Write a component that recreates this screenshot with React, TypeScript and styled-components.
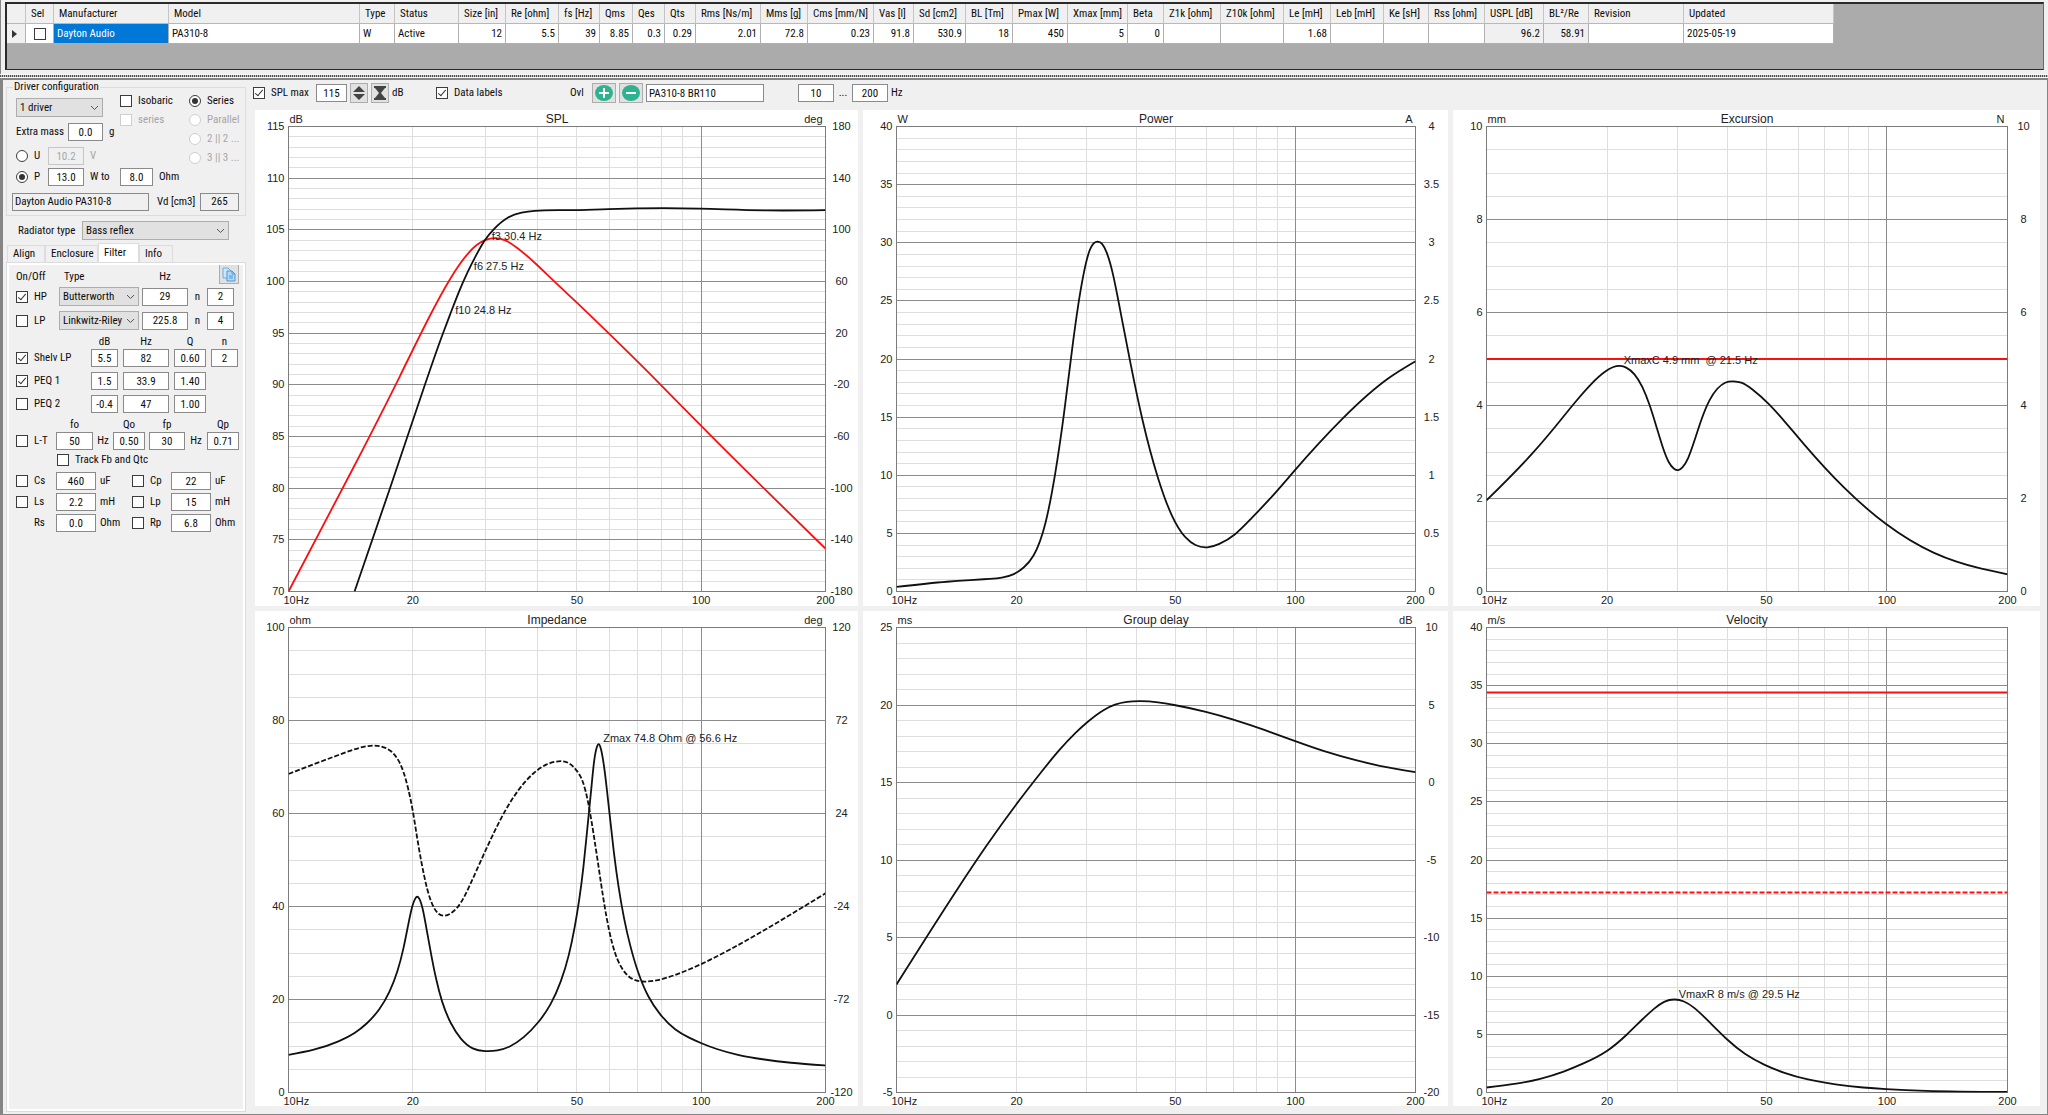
import React, { useId, useLayoutEffect, useRef, useState } from "react";
import styled, { createGlobalStyle, css } from "styled-components";

/* ------------------------------------------------------------------ */
/* Shared values                                                       */
/* ------------------------------------------------------------------ */

const uiFont = `"Liberation Sans Narrow", "Roboto Condensed", "Liberation Sans", Arial, sans-serif`;
const plotFont = `"Liberation Sans", Arial, sans-serif`;

const color = {
  face: "#f0f0f0",
  text: "#0c0c0c",
  faint: "#a6a6a6",
  frame: "#dcdcdc",
  fieldEdge: "#8a8a8a",
  button: "#e1e1e1",
  buttonEdge: "#adadad",
  shadow: "#858585",
};

const GlobalStyle = createGlobalStyle`
  *, *::before, *::after { box-sizing: border-box; }
  body {
    margin: 0;
    background: ${color.face};
    color: ${color.text};
    font: 11px/14px ${uiFont};
  }
  button, input, select { font: inherit; color: inherit; margin: 0; }
`;

/* ------------------------------------------------------------------ */
/* Frame                                                               */
/* ------------------------------------------------------------------ */

const Page = styled.div`
  display: flex;
  flex-direction: column;
  height: 100vh;
  min-height: 720px;
`;

const DriverPane = styled.section`
  flex: none;
  padding: 2px 4px 4px;
  border-left: 1px solid ${color.shadow};
`;

const GridFrame = styled.div`
  min-height: 68px;
  border: 2px solid #2a2a2a;
  border-right: 1px solid #696969;
  border-bottom-width: 1px;
  background: #ababab;
  overflow: hidden;
`;

const Splitter = styled.div`
  flex: none;
  height: 4px;
  border-top: 1px solid #fafafa;
  border-bottom: 1px solid #fafafa;
  background: repeating-linear-gradient(90deg, #4c4c4c 0 1px, #c4c4c4 1px 2px);
`;

const Workspace = styled.main`
  flex: 1;
  min-height: 0;
  display: grid;
  grid-template-columns: 246px 1fr;
  border-style: solid;
  border-color: ${color.shadow};
  border-width: 2px 1px 1px 3px;
`;

/* ------------------------------------------------------------------ */
/* Driver table                                                        */
/* ------------------------------------------------------------------ */

const DriverTable = styled.table`
  table-layout: fixed;
  width: 1826px;
  border-collapse: separate;
  border-spacing: 0;
  white-space: nowrap;
`;

const HeadCell = styled.th`
  height: 20px;
  padding: 0 0 0 5px;
  overflow: hidden;
  font-weight: normal;
  text-align: left;
  background: ${color.face};
  border-right: 1px solid #c4c4c4;
  border-bottom: 1px solid #b8b8b8;
`;

const BodyCell = styled.td<{ $right?: boolean; $tone?: "selected" | "computed" }>`
  height: 20px;
  padding: 0 3px;
  overflow: hidden;
  text-align: ${(p) => (p.$right ? "right" : "left")};
  background: ${(p) => (p.$tone === "selected" ? "#0078d7" : p.$tone === "computed" ? color.face : "#fff")};
  color: ${(p) => (p.$tone === "selected" ? "#fff" : color.text)};
  border-right: 1px solid #b0b0b0;
  border-bottom: 1px solid #b0b0b0;
`;

const RowMark = styled.svg`
  display: block;
  margin-left: 2px;
`;

type Column = {
  name: string;
  width: number;
  value?: string;
  right?: boolean;
  tone?: "selected" | "computed";
};

const columns: Column[] = [
  { name: "Manufacturer", width: 115, value: "Dayton Audio", tone: "selected" },
  { name: "Model", width: 191, value: "PA310-8" },
  { name: "Type", width: 35, value: "W" },
  { name: "Status", width: 64, value: "Active" },
  { name: "Size [in]", width: 47, value: "12", right: true },
  { name: "Re [ohm]", width: 53, value: "5.5", right: true },
  { name: "fs [Hz]", width: 41, value: "39", right: true },
  { name: "Qms", width: 33, value: "8.85", right: true },
  { name: "Qes", width: 32, value: "0.3", right: true },
  { name: "Qts", width: 31, value: "0.29", right: true },
  { name: "Rms [Ns/m]", width: 65, value: "2.01", right: true },
  { name: "Mms [g]", width: 47, value: "72.8", right: true },
  { name: "Cms [mm/N]", width: 66, value: "0.23", right: true },
  { name: "Vas [l]", width: 40, value: "91.8", right: true },
  { name: "Sd [cm2]", width: 52, value: "530.9", right: true },
  { name: "BL [Tm]", width: 47, value: "18", right: true },
  { name: "Pmax [W]", width: 55, value: "450", right: true },
  { name: "Xmax [mm]", width: 60, value: "5", right: true },
  { name: "Beta", width: 36, value: "0", right: true },
  { name: "Z1k [ohm]", width: 57 },
  { name: "Z10k [ohm]", width: 63 },
  { name: "Le [mH]", width: 47, value: "1.68", right: true },
  { name: "Leb [mH]", width: 53 },
  { name: "Ke [sH]", width: 45 },
  { name: "Rss [ohm]", width: 56 },
  { name: "USPL [dB]", width: 59, value: "96.2", right: true, tone: "computed" },
  { name: "BL²/Re", width: 45, value: "58.91", right: true, tone: "computed" },
  { name: "Revision", width: 95 },
  { name: "Updated", width: 150, value: "2025-05-19" },
];

/* ------------------------------------------------------------------ */
/* Controls                                                            */
/* ------------------------------------------------------------------ */

const Tick = styled.input.attrs({ type: "checkbox" })`
  appearance: none;
  flex: none;
  display: grid;
  place-items: center;
  width: 12px;
  height: 12px;
  background: #fff;
  border: 1px solid #3c3c3c;

  &:checked::before {
    content: "";
    width: 4px;
    height: 8px;
    margin-bottom: 2px;
    border: solid #333;
    border-width: 0 1px 1px 0;
    transform: rotate(40deg);
  }
  &:disabled { border-color: #cfcfcf; }
`;

const Dot = styled.input.attrs({ type: "radio" })`
  appearance: none;
  flex: none;
  display: grid;
  place-items: center;
  width: 12px;
  height: 12px;
  background: #fff;
  border: 1px solid #3c3c3c;
  border-radius: 50%;

  &:checked::before {
    content: "";
    width: 6px;
    height: 6px;
    border-radius: 50%;
    background: #333;
  }
  &:disabled { border-color: #cfcfcf; }
`;

const Choice = styled.label<{ $w?: number; $off?: boolean; $cell?: boolean }>`
  flex: none;
  display: flex;
  align-items: center;
  gap: 6px;
  width: ${(p) => (p.$w ? `${p.$w}px` : "auto")};
  color: ${(p) => (p.$off ? color.faint : "inherit")};
  white-space: nowrap;
  ${(p) => p.$cell && css`justify-content: center;`}
`;

const Field = styled.input.attrs({ type: "text" })<{ $w: number; $start?: boolean }>`
  flex: none;
  width: ${(p) => p.$w}px;
  height: 18px;
  padding: 0 2px;
  text-align: ${(p) => (p.$start ? "left" : "center")};
  background: #fff;
  border: 1px solid ${color.fieldEdge};
  border-radius: 0;
  outline: 0;

  &:read-only { background: ${color.face}; }
  &:disabled { color: ${color.faint}; background: ${color.face}; border-color: #c6c6c6; }
`;

const Caption = styled.span<{ $w?: number; $center?: boolean; $off?: boolean; $indent?: boolean }>`
  flex: none;
  width: ${(p) => (p.$w ? `${p.$w}px` : "auto")};
  padding-left: ${(p) => (p.$indent ? "18px" : "0")};
  text-align: ${(p) => (p.$center ? "center" : "left")};
  color: ${(p) => (p.$off ? color.faint : "inherit")};
  white-space: nowrap;
`;

const ComboBox = styled.span<{ $w: number }>`
  flex: none;
  display: grid;
  width: ${(p) => p.$w}px;
  height: 19px;

  > * { grid-area: 1 / 1; }
  > svg { place-self: center end; margin-right: 4px; pointer-events: none; }
`;

const ComboSelect = styled.select`
  appearance: none;
  width: 100%;
  padding: 0 12px 0 3px;
  background: ${color.button};
  border: 1px solid ${color.buttonEdge};
  border-radius: 0;
`;

function Combo({ width, value, label, id }: { width: number; value: string; label?: string; id?: string }) {
  return (
    <ComboBox $w={width}>
      <ComboSelect id={id} aria-label={label} defaultValue={value}>
        <option>{value}</option>
      </ComboSelect>
      <svg width="9" height="6" viewBox="0 0 9 6" aria-hidden="true">
        <path d="M1 1l3.5 3.5L8 1" fill="none" stroke="#555" />
      </svg>
    </ComboBox>
  );
}

const IconButton = styled.button<{ $w: number }>`
  flex: none;
  display: grid;
  place-items: center;
  width: ${(p) => p.$w}px;
  height: 20px;
  padding: 0;
  background: ${color.button};
  border: 1px solid ${color.buttonEdge};
`;

/* ------------------------------------------------------------------ */
/* Sidebar                                                             */
/* ------------------------------------------------------------------ */

const Sidebar = styled.aside`
  display: flex;
  flex-direction: column;
  min-height: 0;
  padding: 1px 3px 2px;
`;

const ConfigGroup = styled.fieldset`
  min-width: 0;
  margin: 0;
  padding: 0 5px 4px;
  border: 1px solid ${color.frame};
`;

const ConfigLegend = styled.legend`
  margin-left: 1px;
  padding: 0 1px;
  line-height: 12px;
`;

const ConfigGrid = styled.div`
  display: grid;
  grid-template-columns: 104px 69px 1fr;
  row-gap: 3px;
  margin-top: -2px;
  padding-left: 4px;
`;

const MassStack = styled.div`
  display: flex;
  flex-direction: column;
  gap: 6px;
  padding-top: 7px;
`;

const ChoiceStack = styled.div<{ $tall?: boolean }>`
  display: grid;
  grid-auto-rows: 19px;
  align-content: start;
  ${(p) => p.$tall && css`grid-row: span 2;`}
`;

const Line = styled.div<{ $gap: number; $h?: number; $top?: number; $wide?: boolean; $low?: boolean }>`
  display: flex;
  align-items: ${(p) => (p.$low ? "flex-end" : "center")};
  gap: ${(p) => p.$gap}px;
  height: ${(p) => p.$h ?? 18}px;
  margin-top: ${(p) => p.$top ?? 0}px;
  ${(p) => p.$wide && css`grid-column: 1 / 3;`}
`;

const RadiatorLine = styled.div`
  display: flex;
  align-items: center;
  margin: 5px 0 3px;
  padding-left: 12px;

  > label { width: 64px; }
`;

const TabStrip = styled.div`
  display: flex;
  align-items: flex-end;
  height: 19px;
  padding-left: 1px;
`;

const TabButton = styled.button<{ $w: number; $active?: boolean }>`
  width: ${(p) => p.$w}px;
  height: ${(p) => (p.$active ? 19 : 17)}px;
  padding: 0 0 0 5px;
  text-align: left;
  background: ${(p) => (p.$active ? "#fff" : color.face)};
  border: 1px solid ${color.frame};
  border-bottom: 0;
`;

const TabPage = styled.div`
  flex: 1;
  min-height: 0;
  padding: 1px 6px 0 9px;
  border: 1px solid ${color.frame};
  outline: 2px solid #fff;
  outline-offset: -3px;
`;

const CopyButton = styled(IconButton)`
  margin-left: auto;
`;

function Sides() {
  return (
    <Sidebar>
      <ConfigGroup>
        <ConfigLegend>Driver configuration</ConfigLegend>
        <ConfigGrid>
          <MassStack>
            <Combo width={87} value="1 driver" label="Number of drivers" />
            <Line $gap={6}>
              <Caption as="label" htmlFor="mass" $w={46}>Extra mass</Caption>
              <Field id="mass" $w={35} defaultValue="0.0" />
              <Caption>g</Caption>
            </Line>
            <Line $gap={6}>
              <Choice $w={26}><Dot name="drive" />U</Choice>
              <Field $w={36} defaultValue="10.2" disabled aria-label="Voltage" />
              <Caption $off>V</Caption>
            </Line>
          </MassStack>
          <ChoiceStack>
            <Choice><Tick />Isobaric</Choice>
            <Choice $off><Tick disabled />series</Choice>
          </ChoiceStack>
          <ChoiceStack $tall>
            <Choice><Dot name="wiring" defaultChecked />Series</Choice>
            <Choice $off><Dot name="wiring" disabled />Parallel</Choice>
            <Choice $off><Dot name="wiring" disabled />2 || 2 ...</Choice>
            <Choice $off><Dot name="wiring" disabled />3 || 3 ...</Choice>
          </ChoiceStack>
          <Line $gap={6} $wide>
            <Choice $w={26}><Dot name="drive" defaultChecked />P</Choice>
            <Field $w={36} defaultValue="13.0" aria-label="Power" />
            <Caption $w={24}>W to</Caption>
            <Field $w={33} defaultValue="8.0" aria-label="Load" />
            <Caption>Ohm</Caption>
          </Line>
        </ConfigGrid>
        <Line $gap={8} $h={19} $top={6}>
          <Field $w={137} $start readOnly defaultValue="Dayton Audio PA310-8" aria-label="Driver" />
          <Caption as="label" htmlFor="vd" $w={35}>Vd [cm3]</Caption>
          <Field id="vd" $w={39} readOnly defaultValue="265" />
        </Line>
      </ConfigGroup>

      <RadiatorLine>
        <label htmlFor="radiator">Radiator type</label>
        <Combo id="radiator" width={147} value="Bass reflex" />
      </RadiatorLine>

      <TabStrip role="tablist">
        <TabButton role="tab" $w={38}>Align</TabButton>
        <TabButton role="tab" $w={53}>Enclosure</TabButton>
        <TabButton role="tab" aria-selected $active $w={41}>Filter</TabButton>
        <TabButton role="tab" $w={34}>Info</TabButton>
      </TabStrip>
      <TabPage role="tabpanel">
        <Filters />
      </TabPage>
    </Sidebar>
  );
}

function Filters() {
  return (
    <div>
      <Line $gap={3} $h={20} $low>
        <Caption $w={45}>On/Off</Caption>
        <Caption $w={75}>Type</Caption>
        <Caption $w={46} $center>Hz</Caption>
        <CopyButton $w={20} aria-label="Copy filter">
          <svg width="14" height="15" viewBox="0 0 14 15" aria-hidden="true">
            <path d="M1 1h5l3 3v7H1z" fill="#cfe6fa" stroke="#6aaee0" />
            <path d="M5 4h5l3 3v7H5z" fill="#b5d8f6" stroke="#4a98d6" />
            <path d="M10 4v3h3M7 9h4M7 11h4" fill="none" stroke="#4a98d6" />
          </svg>
        </CopyButton>
      </Line>
      <PassLine name="HP" kind="Butterworth" hz="29" order="2" top={3} on />
      <PassLine name="LP" kind="Linkwitz-Riley" hz="225.8" order="4" top={5} />

      <Line $gap={5} $h={12} $top={6}>
        <Caption $w={70} />
        <Caption $w={27} $center>dB</Caption>
        <Caption $w={46} $center>Hz</Caption>
        <Caption $w={32} $center>Q</Caption>
        <Caption $w={27} $center>n</Caption>
      </Line>
      <EqLine name="Shelv LP" db="5.5" hz="82" q="0.60" order="2" top={1} on />
      <EqLine name="PEQ 1" db="1.5" hz="33.9" q="1.40" top={5} on />
      <EqLine name="PEQ 2" db="-0.4" hz="47" q="1.00" top={5} />

      <Line $gap={4} $h={12} $top={6}>
        <Caption $w={36} />
        <Caption $w={37} $center>fo</Caption>
        <Caption $w={12} />
        <Caption $w={32} $center>Qo</Caption>
        <Caption $w={36} $center>fp</Caption>
        <Caption $w={14} />
        <Caption $w={32} $center>Qp</Caption>
      </Line>
      <Line $gap={4} $top={1}>
        <Choice $w={36}><Tick />L-T</Choice>
        <Field $w={37} defaultValue="50" aria-label="fo" />
        <Caption $w={12} $center>Hz</Caption>
        <Field $w={32} defaultValue="0.50" aria-label="Qo" />
        <Field $w={36} defaultValue="30" aria-label="fp" />
        <Caption $w={14} $center>Hz</Caption>
        <Field $w={32} defaultValue="0.71" aria-label="Qp" />
      </Line>
      <Line $gap={4} $h={14} $top={3}>
        <Caption $w={37} />
        <Choice><Tick />Track Fb and Qtc</Choice>
      </Line>

      <PartLine left="Cs" leftValue="460" right="Cp" rightValue="22" unit="uF" top={5} />
      <PartLine left="Ls" leftValue="2.2" right="Lp" rightValue="15" unit="mH" top={3} />
      <PartLine left="Rs" leftValue="0.0" right="Rp" rightValue="6.8" unit="Ohm" top={3} fixedLeft />
    </div>
  );
}

type PassProps = { name: string; kind: string; hz: string; order: string; top: number; on?: boolean };

function PassLine({ name, kind, hz, order, top, on }: PassProps) {
  return (
    <Line $gap={3} $h={19} $top={top}>
      <Choice $w={40}><Tick defaultChecked={on} />{name}</Choice>
      <Combo width={80} value={kind} label={`${name} type`} />
      <Field $w={46} defaultValue={hz} aria-label={`${name} Hz`} />
      <Caption $w={13} $center>n</Caption>
      <Field $w={27} defaultValue={order} aria-label={`${name} n`} />
    </Line>
  );
}

type EqProps = { name: string; db: string; hz: string; q: string; order?: string; top: number; on?: boolean };

function EqLine({ name, db, hz, q, order, top, on }: EqProps) {
  return (
    <Line $gap={5} $top={top}>
      <Choice $w={70}><Tick defaultChecked={on} />{name}</Choice>
      <Field $w={27} defaultValue={db} aria-label={`${name} dB`} />
      <Field $w={46} defaultValue={hz} aria-label={`${name} Hz`} />
      <Field $w={32} defaultValue={q} aria-label={`${name} Q`} />
      {order && <Field $w={27} defaultValue={order} aria-label={`${name} n`} />}
    </Line>
  );
}

type PartProps = {
  left: string;
  leftValue: string;
  right: string;
  rightValue: string;
  unit: string;
  top: number;
  fixedLeft?: boolean;
};

function PartLine({ left, leftValue, right, rightValue, unit, top, fixedLeft }: PartProps) {
  return (
    <Line $gap={4} $top={top}>
      {fixedLeft ? <Caption $w={36} $indent>{left}</Caption> : <Choice $w={36}><Tick />{left}</Choice>}
      <Field $w={40} defaultValue={leftValue} aria-label={`${left} value`} />
      <Caption $w={28}>{unit}</Caption>
      <Choice $w={35}><Tick />{right}</Choice>
      <Field $w={40} defaultValue={rightValue} aria-label={`${right} value`} />
      <Caption $w={24}>{unit}</Caption>
    </Line>
  );
}

/* ------------------------------------------------------------------ */
/* Toolbar                                                             */
/* ------------------------------------------------------------------ */

const ChartPane = styled.section`
  display: flex;
  flex-direction: column;
  min-width: 0;
  min-height: 0;
  padding: 3px 7px 8px 4px;
`;

const Toolbar = styled.div`
  flex: none;
  display: flex;
  height: 27px;
`;

const ToolGroup = styled.div<{ $w?: number }>`
  display: flex;
  align-items: center;
  gap: 3px;
  height: 20px;
  min-width: ${(p) => (p.$w ? `${p.$w}px` : "0")};
`;

function Round({ plus }: { plus?: boolean }) {
  return (
    <svg width="18" height="16" viewBox="0 0 18 16" aria-hidden="true">
      <ellipse cx="9" cy="8" rx="9" ry="8" fill="#2fb290" />
      <path d={plus ? "M4 8h10M9 3v10" : "M4 8h10"} stroke="#fff" strokeWidth="2" fill="none" />
    </svg>
  );
}

function Tools() {
  return (
    <Toolbar>
      <ToolGroup $w={183}>
        <Choice $w={60}><Tick defaultChecked />SPL max</Choice>
        <Field $w={31} defaultValue="115" aria-label="SPL max value" />
        <IconButton $w={18} aria-label="Step SPL max">
          <svg width="12" height="14" viewBox="0 0 12 14" aria-hidden="true">
            <path d="M6 0l6 6H0zM6 14l6-6H0z" fill="#444" />
          </svg>
        </IconButton>
        <IconButton $w={18} aria-label="Fit SPL range">
          <svg width="12" height="14" viewBox="0 0 12 14" aria-hidden="true">
            <path d="M0 0h12v2h-1L7 7l4 5h1v2H0v-2h1l4-5-4-5H0z" fill="#444" />
          </svg>
        </IconButton>
        <Caption>dB</Caption>
      </ToolGroup>
      <ToolGroup $w={134}>
        <Choice><Tick defaultChecked />Data labels</Choice>
      </ToolGroup>
      <ToolGroup $w={228}>
        <Caption $w={19}>Ovl</Caption>
        <IconButton $w={24} aria-label="Add overlay"><Round plus /></IconButton>
        <IconButton $w={24} aria-label="Remove overlay"><Round /></IconButton>
        <Field $w={118} $start defaultValue="PA310-8 BR110" aria-label="Overlay name" />
      </ToolGroup>
      <ToolGroup>
        <Field $w={36} defaultValue="10" aria-label="Lowest frequency" />
        <Caption $w={12} $center>...</Caption>
        <Field $w={36} defaultValue="200" aria-label="Highest frequency" />
        <Caption>Hz</Caption>
      </ToolGroup>
    </Toolbar>
  );
}

/* ------------------------------------------------------------------ */
/* Charts                                                              */
/* ------------------------------------------------------------------ */

const ChartGrid = styled.div`
  flex: 1;
  min-height: 0;
  display: grid;
  grid-template-columns: 603fr 585fr 587fr;
  grid-template-rows: 1fr 1fr;
  gap: 5px;
  margin-left: 2px;
`;

const ChartPanel = styled.figure`
  min-width: 0;
  min-height: 0;
  margin: 0;
  overflow: hidden;
  background: #fff;

  svg { display: block; font: 11px ${plotFont}; fill: #222; }
`;

/* Curve points: [thousandths along the log frequency axis, value]. */
type Point = [number, number];

type Curve = { points: Point[]; stroke?: string; dashed?: boolean; onRight?: boolean };
type Note = { hz: number; value: number; text: string };

type ChartSpec = {
  title: string;
  unit: string;
  rightUnit?: string;
  range: [number, number];
  rightRange?: [number, number];
  major: number;
  minor: number;
  rightLabels?: string[];
  curves: Curve[];
  notes?: Note[];
};

const BLACK = "#111";
const RED = "#fa1010";

const charts: ChartSpec[] = [
  {
    title: "SPL", unit: "dB", rightUnit: "deg", range: [70, 115], major: 5, minor: 1,
    rightLabels: ["-180", "-140", "-100", "-60", "-20", "20", "60", "100", "140", "180"],
    curves: [
      {
        stroke: RED,
        points: [[0, 70], [120, 81.9], [208, 90.9], [260, 96.35], [301, 100.25],
          [335, 102.75], [351, 103.55], [366, 104], [386, 104.2], [405, 103.95], [426, 103.25],
          [463, 101.6], [492, 100.15], [534, 98.1], [596, 95], [679, 90.75], [769, 86], [885, 80], [1000, 74.15]],
      },
      {
        points: [[123, 70], [189, 80], [254, 90], [286, 94.75], [302, 96.95], [317, 98.95],
          [334, 100.95], [350, 102.6], [365, 103.95], [383, 105.1], [409, 106.2], [434, 106.66], [459, 106.84],
          [534, 106.9], [596, 107], [700, 107.1], [767, 107.05],
          [891, 106.88], [1000, 106.9]],
      },
    ],
    notes: [
      { hz: 30.4, value: 103.8, text: "f3 30.4 Hz" },
      { hz: 27.5, value: 100.9, text: "f6 27.5 Hz" },
      { hz: 24.8, value: 96.7, text: "f10 24.8 Hz" },
    ],
  },
  {
    title: "Power", unit: "W", rightUnit: "A", range: [0, 40], major: 5, minor: 1,
    rightLabels: ["0", "0.5", "1", "1.5", "2", "2.5", "3", "3.5", "4"],
    curves: [
      {
        points: [[0, 0.4], [97, 0.84], [142, 0.98], [180, 1.09], [203, 1.2], [226, 1.5], [245, 2.06],
          [264, 3.1], [287, 5.9], [306, 10.2], [323, 15.4],
          [340, 21.4], [350, 24.6], [360, 27.2], [371, 29.2], [380, 29.95], [388, 30.1], [396, 29.9], [405, 29.15],
          [417, 27.3], [428, 24.9], [451, 19.6], [474, 14.75], [504, 9.75],
          [530, 6.6], [557, 4.65], [576, 4], [599, 3.8], [622, 4.1], [653, 4.95], [683, 6.25],
          [721, 8.05], [767, 10.4], [858, 14.8], [950, 18.4], [1000, 19.8]],
      },
    ],
  },
  {
    title: "Excursion", unit: "mm", rightUnit: "N", range: [0, 10], major: 2, minor: 0.5,
    rightLabels: ["0", "2", "4", "6", "8", "10"],
    curves: [
      { stroke: RED, points: [[0, 5], [1000, 5]] },
      {
        points: [[0, 1.96], [88, 2.97], [133, 3.56], [171, 4.08], [201, 4.46], [228, 4.73],
          [256, 4.85], [269, 4.81], [284, 4.67], [299, 4.4], [313, 4.01], [326, 3.55], [339, 3.08], [350, 2.78],
          [360, 2.64], [368, 2.61], [376, 2.67], [387, 2.87], [399, 3.24], [413, 3.71], [428, 4.11], [443, 4.36],
          [458, 4.49], [474, 4.52], [489, 4.49], [511, 4.34], [542, 4.03], [572, 3.66], [610, 3.16],
          [685, 2.25], [767, 1.45], [859, 0.83], [950, 0.49], [1000, 0.37]],
      },
    ],
    notes: [{ hz: 21.5, value: 4.86, text: "XmaxC 4.9 mm\u00a0 @ 21.5 Hz" }],
  },
  {
    title: "Impedance", unit: "ohm", rightUnit: "deg", range: [0, 100], rightRange: [-120, 120], major: 20, minor: 5,
    rightLabels: ["-120", "-72", "-24", "24", "72", "120"],
    curves: [
      {
        dashed: true, onRight: true,
        points: [[0, 44.4], [47, 49.4], [93, 54.2], [131, 57.8], [157, 59], [176, 58.3], [191, 56.1], [203, 52.2],
          [214, 45.5], [223, 36.6], [231, 26], [239, 12.5], [248, -1.8], [258, -14.6], [268, -23], [279, -27.6],
          [290, -28.7], [305, -27], [321, -22], [336, -14], [355, -2.4], [385, 15.5], [404, 25.6],
          [427, 35.6], [457, 44.9], [480, 49.2], [507, 51], [522, 50], [537, 46], [549, 39.6], [558, 29.6], [568, 13.6],
          [577, -2.8], [587, -21], [597, -36.2], [608, -47.9], [621, -55.9], [636, -60.6], [659, -62.7], [685, -62.1],
          [723, -59], [767, -53.9], [822, -46.2], [883, -36.7], [1000, -17.2]],
      },
      {
        points: [[0, 8.1], [47, 9.2], [93, 11], [123, 12.8], [146, 14.9], [169, 17.9], [188, 21.7], [203, 26.2],
          [214, 31], [223, 36.1], [231, 40.2], [236, 41.7], [240, 42.1], [244, 41.6], [250, 39.4], [257, 35.2],
          [266, 29.5], [275, 24.4], [286, 19.6], [302, 15], [321, 11.6], [343, 9.5], [366, 8.9], [389, 9.05],
          [412, 9.9], [438, 11.9], [465, 15.1], [488, 19], [507, 23.9], [522, 29.6], [533, 35.6], [541, 41.2],
          [549, 48.3], [556, 56.2], [564, 65.5], [569, 71.1], [574, 74.2], [577.5, 74.9], [581, 74.2], [587, 70.6],
          [593, 65], [606, 51.6], [615, 44], [625, 37.4], [636, 31.8], [651, 25.9], [670, 20.7],
          [693, 16.7], [720, 13.6], [746, 11.8], [769, 10.6], [799, 9.3], [837, 8.1], [883, 7.15], [936, 6.4], [1000, 5.8]],
      },
    ],
    notes: [{ hz: 56.6, value: 74.9, text: "Zmax 74.8 Ohm @ 56.6 Hz" }],
  },
  {
    title: "Group delay", unit: "ms", rightUnit: "dB", range: [-5, 25], major: 5, minor: 1,
    rightLabels: ["-20", "-15", "-10", "-5", "0", "5", "10"],
    curves: [
      {
        points: [[0, 1.97], [116, 8.05], [173, 10.9], [231, 13.6], [276, 15.55], [314, 17.1], [345, 18.2],
          [368, 18.9], [398, 19.65], [421, 20.02], [444, 20.2], [470, 20.25], [504, 20.17], [535, 20], [596, 19.56],
          [649, 19.06], [710, 18.38], [767, 17.68], [824, 17.02], [885, 16.44], [931, 16.08], [1000, 15.67]],
      },
    ],
  },
  {
    title: "Velocity", unit: "m/s", range: [0, 40], major: 5, minor: 1,
    curves: [
      { stroke: RED, points: [[0, 34.4], [1000, 34.4]] },
      { stroke: RED, dashed: true, points: [[0, 17.2], [1000, 17.2]] },
      {
        points: [[0, 0.43], [57, 0.76], [103, 1.18], [148, 1.8], [186, 2.5], [231, 3.57], [269, 4.97], [299, 6.28],
          [322, 7.22], [341, 7.8], [361, 8], [379, 7.83], [398, 7.3], [428, 6.05], [462, 4.56], [496, 3.33], [534, 2.38],
          [572, 1.69], [617, 1.12], [670, 0.7], [723, 0.43], [767, 0.29], [844, 0.14], [1000, 0.05]],
      },
    ],
    notes: [{ hz: 29.5, value: 8, text: "VmaxR 8 m/s @ 29.5 Hz" }],
  },
];

/* Natural cubic spline through the points, written as bezier segments. */
function smoothPath(pts: Point[]): string {
  const n = pts.length;
  const h = (i: number) => pts[i + 1][0] - pts[i][0];
  const slope = (i: number) => (pts[i + 1][1] - pts[i][1]) / h(i);
  const c = new Array<number>(n).fill(0);
  const r = new Array<number>(n).fill(0);
  for (let i = 1; i < n - 1; i++) {
    const div = 2 * (h(i - 1) + h(i)) - h(i - 1) * c[i - 1];
    c[i] = h(i) / div;
    r[i] = (6 * (slope(i) - slope(i - 1)) - h(i - 1) * r[i - 1]) / div;
  }
  const bend = new Array<number>(n).fill(0);
  for (let i = n - 2; i > 0; i--) bend[i] = r[i] - c[i] * bend[i + 1];

  let d = `M${pts[0][0].toFixed(2)} ${pts[0][1].toFixed(2)}`;
  for (let i = 0; i < n - 1; i++) {
    const [x0, y0] = pts[i];
    const [x1, y1] = pts[i + 1];
    const w = h(i);
    const start = slope(i) - (w * (2 * bend[i] + bend[i + 1])) / 6;
    const end = slope(i) + (w * (bend[i] + 2 * bend[i + 1])) / 6;
    const third = w / 3;
    d += `C${[x0 + third, y0 + start * third, x1 - third, y1 - end * third, x1, y1].map((v) => v.toFixed(2)).join(" ")}`;
  }
  return d;
}

const share = (hz: number) => Math.log(hz / 10) / Math.log(20);
const crisp = (v: number) => Math.floor(v) + 0.5;

function Chart({ spec }: { spec: ChartSpec }) {
  const box = useRef<HTMLElement>(null);
  const clip = useId();
  const [size, setSize] = useState({ w: 590, h: 495 });

  useLayoutEffect(() => {
    const el = box.current;
    if (!el) return;
    const measure = () => setSize({ w: el.clientWidth, h: el.clientHeight });
    measure();
    const watcher = new ResizeObserver(measure);
    watcher.observe(el);
    return () => watcher.disconnect();
  }, []);

  const left = 33.5;
  const right = Math.floor(size.w) - 32.5;
  const top = 16.5;
  const bottom = Math.floor(size.h) - 14.5;
  const [lo, hi] = spec.range;
  const x = (t: number) => left + t * (right - left);
  const y = (v: number, a = lo, b = hi) => bottom - ((v - a) / (b - a)) * (bottom - top);

  const minorCount = Math.round((hi - lo) / spec.minor);
  const majorCount = Math.round((hi - lo) / spec.major);
  const minors = Array.from({ length: minorCount + 1 }, (_, i) => crisp(y(lo + i * spec.minor)));
  const majors = Array.from({ length: majorCount + 1 }, (_, i) => lo + i * spec.major);

  return (
    <ChartPanel ref={box}>
      <svg width={size.w} height={size.h} role="img" aria-label={spec.title}>
        <clipPath id={clip}>
          <rect x={left} y={top} width={Math.max(right - left, 0)} height={Math.max(bottom - top, 0)} />
        </clipPath>
        <g stroke="#dedede" shapeRendering="crispEdges">
          {minors.map((p, i) => <line key={i} x1={left} x2={right} y1={p} y2={p} />)}
          {[20, 30, 40, 50, 60, 70, 80, 90].map((f) => (
            <line key={f} x1={crisp(x(share(f)))} x2={crisp(x(share(f)))} y1={top} y2={bottom} />
          ))}
        </g>
        <g stroke="#8c8c8c" shapeRendering="crispEdges">
          {majors.map((v) => <line key={v} x1={left} x2={right} y1={crisp(y(v))} y2={crisp(y(v))} />)}
          <line x1={crisp(x(share(100)))} x2={crisp(x(share(100)))} y1={top} y2={bottom} />
          <rect x={left} y={top} width={Math.max(right - left, 0)} height={Math.max(bottom - top, 0)} fill="none" stroke="#7c7c7c" />
        </g>

        <g clipPath={`url(#${clip})`} fill="none">
          {spec.curves.map((c, i) => {
            const [a, b] = c.onRight && spec.rightRange ? spec.rightRange : spec.range;
            return (
              <path
                key={i}
                d={smoothPath(c.points.map(([t, v]) => [x(t / 1000), y(v, a, b)] as Point))}
                stroke={c.stroke ?? BLACK}
                strokeWidth={c.points.length === 2 ? 2 : 1.8}
                strokeDasharray={c.dashed ? "5 2" : undefined}
              />
            );
          })}
        </g>

        <text x={(left + right) / 2} y={top - 4} textAnchor="middle" fontSize="12">{spec.title}</text>
        <text x={left + 1} y={top - 4}>{spec.unit}</text>
        {spec.rightUnit && <text x={right - 3} y={top - 4} textAnchor="end">{spec.rightUnit}</text>}
        {majors.map((v, i) => (
          <React.Fragment key={v}>
            <text x={left - 4} y={Math.floor(y(v)) + 4} textAnchor="end">{v}</text>
            {spec.rightLabels && (
              <text x={right + 16} y={Math.floor(y(v)) + 4} textAnchor="middle">{spec.rightLabels[i]}</text>
            )}
          </React.Fragment>
        ))}
        <text x={left - 5} y={bottom + 12}>10Hz</text>
        {[20, 50, 100, 200].map((f) => (
          <text key={f} x={x(share(f))} y={bottom + 12} textAnchor="middle">{f}</text>
        ))}
        {spec.notes?.map((n) => (
          <text key={n.text} x={x(share(n.hz)) + 4} y={y(n.value) - 2}>{n.text}</text>
        ))}
      </svg>
    </ChartPanel>
  );
}

/* ------------------------------------------------------------------ */

export default function App() {
  return (
    <Page>
      <GlobalStyle />
      <DriverPane>
        <GridFrame>
          <DriverTable>
            <colgroup>
              <col style={{ width: 19 }} />
              <col style={{ width: 28 }} />
              {columns.map((c) => <col key={c.name} style={{ width: c.width }} />)}
            </colgroup>
            <thead>
              <tr>
                <HeadCell />
                <HeadCell>Sel</HeadCell>
                {columns.map((c) => <HeadCell key={c.name}>{c.name}</HeadCell>)}
              </tr>
            </thead>
            <tbody>
              <tr>
                <BodyCell $tone="computed">
                  <RowMark width="5" height="8" viewBox="0 0 5 8" aria-hidden="true">
                    <path d="M0 0l5 4-5 4z" fill="#333" />
                  </RowMark>
                </BodyCell>
                <BodyCell>
                  <Choice $cell><Tick aria-label="Select Dayton Audio PA310-8" /></Choice>
                </BodyCell>
                {columns.map((c) => (
                  <BodyCell key={c.name} $right={c.right} $tone={c.tone}>{c.value}</BodyCell>
                ))}
              </tr>
            </tbody>
          </DriverTable>
        </GridFrame>
      </DriverPane>
      <Splitter />
      <Workspace>
        <Sides />
        <ChartPane>
          <Tools />
          <ChartGrid>
            {charts.map((spec) => <Chart key={spec.title} spec={spec} />)}
          </ChartGrid>
        </ChartPane>
      </Workspace>
    </Page>
  );
}
